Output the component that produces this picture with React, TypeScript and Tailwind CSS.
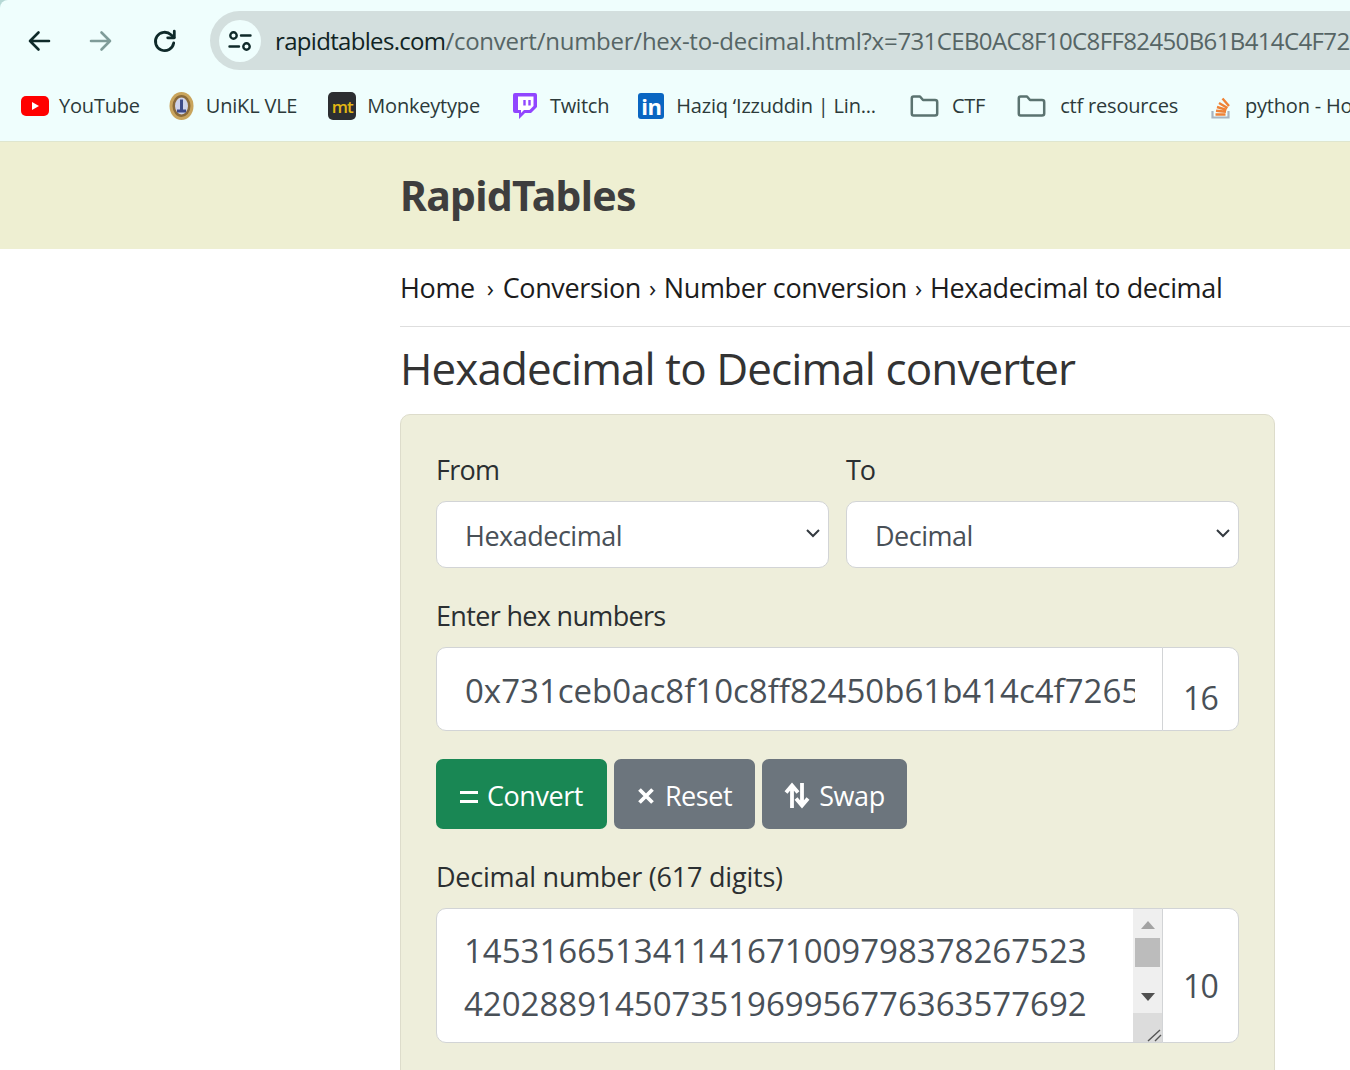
import React from "react";

const F = { fontFamily: '"Open Sans", "Noto Sans", sans-serif' };

function Bookmark({ icon, label, gap = "gap-[10px]", className = "" }: { icon: React.ReactNode; label: string; gap?: string; className?: string }) {
  return (
    <div className={`flex items-center shrink-0 ${gap} ${className}`}>
      <span className="w-[30px] h-[30px] flex items-center justify-center shrink-0">{icon}</span>
      <span className="text-[20px] leading-[28px] text-[#2c3a3a] whitespace-nowrap tracking-[-0.2px]">{label}</span>
    </div>
  );
}

const Folder = () => (
  <svg width="29" height="22" viewBox="0 0 29 22" fill="none" stroke="#5b7370" strokeWidth="2.5" strokeLinejoin="round">
    <path d="M1.8 3.2 Q1.8 1.5 3.5 1.5 H10 L13 5 H25 Q27.2 5 27.2 7 V18.5 Q27.2 20.5 25 20.5 H3.5 Q1.8 20.5 1.8 18.5 Z" />
  </svg>
);

const Chevron = () => (
  <svg width="16" height="10" viewBox="0 0 16 10" fill="none" stroke="#343a40" strokeWidth="2" className="mb-[4px]">
    <path d="M2 2l6 6 6-6" />
  </svg>
);

export default function App() {
  return (
    <div className="w-[1350px] h-[1070px] overflow-hidden bg-[#b5d8d5] text-[#212529]" style={F}>
      {/* browser chrome */}
      <div className="h-[142px] bg-[#effefd] rounded-tl-[8px] border-b border-[#dfe6cf] flex flex-col overflow-hidden">
        <div className="h-[82px] pt-[11px] flex items-start shrink-0">
          <div className="flex items-center h-[59px] pl-[25px] shrink-0">
            <svg width="28" height="28" viewBox="0 0 28 28" fill="none" stroke="#0f2a2a" strokeWidth="2.6" strokeLinecap="round" strokeLinejoin="round">
              <path d="M24 14H5M13.5 5.5 5 14l8.5 8.5" />
            </svg>
            <svg width="28" height="28" viewBox="0 0 28 28" fill="none" stroke="#7f9c99" strokeWidth="2.6" strokeLinecap="round" strokeLinejoin="round" className="ml-[34px]">
              <path d="M4 14h19M14.5 5.5 23 14l-8.5 8.5" />
            </svg>
            <svg width="26" height="26" viewBox="0 0 26 26" fill="none" stroke="#0f2a2a" strokeWidth="2.8" strokeLinecap="round" strokeLinejoin="round" className="ml-[37px]">
              <path d="M21.7 15A9.2 9.2 0 1 1 19 6.8L22 9.5" />
              <path d="M22.3 3.2v6.6h-6.6" />
            </svg>
          </div>
          <div className="ml-[32px] flex-1 h-[59px] rounded-l-full bg-[#d3dfde] flex items-center pl-[9px] min-w-0">
            <div className="w-[42px] h-[42px] rounded-full bg-[#effefd] flex items-center justify-center shrink-0">
              <svg width="24" height="22" viewBox="0 0 24 22" fill="none" stroke="#0f2a2a" strokeWidth="2.4" strokeLinecap="round">
                <circle cx="5.5" cy="5.5" r="3.2" />
                <path d="M13 5.5h9.5M1.5 16.5h9.5" />
                <circle cx="18.5" cy="16.5" r="3.2" />
              </svg>
            </div>
            <div className="ml-[14px] text-[24px] leading-[32px] whitespace-nowrap text-[#566565]">
              <span className="text-[#102424] tracking-[-0.68px]">rapidtables.com</span>
              <span className="tracking-[-0.25px]">/convert/number/hex-to-decimal.html?x=</span>
              <span className="tracking-[-0.62px]">731CEB0AC8F10C8FF82450B61B414C4F7265</span>
            </div>
          </div>
        </div>
        <div className="flex items-center h-[48px] pl-[20px] gap-[28px] whitespace-nowrap">
          <Bookmark
            gap="gap-[9px]"
            icon={
              <svg width="30" height="22" viewBox="0 0 30 22">
                <rect x="1" y="1" width="28" height="20" rx="5" fill="#f00" />
                <path d="M12 7l7 4-7 4z" fill="#fff" />
              </svg>
            }
            label="YouTube"
          />
          <Bookmark
            gap="gap-[9px]"
            className="-ml-[1px]"
            icon={
              <svg width="25" height="30" viewBox="0 0 25 30">
                <ellipse cx="12.5" cy="15" rx="12" ry="14" fill="#c9a45c" />
                <ellipse cx="12.5" cy="15" rx="9" ry="11" fill="#8a6a3a" />
                <ellipse cx="12.5" cy="15" rx="6.5" ry="8.5" fill="#cfd3ea" />
                <path d="M12.5 8.5v10M8 20h9" stroke="#3d4a88" strokeWidth="3" />
              </svg>
            }
            label="UniKL VLE"
          />
          <Bookmark
            gap="gap-[10px]"
            className="ml-[2px]"
            icon={
              <span className="w-[28px] h-[28px] rounded-[5px] bg-[#2c2e31] flex items-center justify-center text-[#e2b714] text-[17px] font-semibold leading-none tracking-[-1px]">mt</span>
            }
            label="Monkeytype"
          />
          <Bookmark
            gap="gap-[10px]"
            className="ml-[2px]"
            icon={
              <svg width="26" height="28" viewBox="0 0 26 28">
                <path d="M3 1h20q2 0 2 2v12l-6 6h-6l-6 6v-6H3q-2 0-2-2V3q0-2 2-2z" fill="#9146ff" />
                <path d="M6 4.5h15.5v9.5l-4 4H12l-3 3v-3H6z" fill="#fff" />
                <path d="M12.5 8v5.5M17.5 8v5.5" stroke="#9146ff" strokeWidth="2.4" />
              </svg>
            }
            label="Twitch"
          />
          <Bookmark
            gap="gap-[10px]"
            className="-ml-[1px]"
            icon={
              <span className="w-[26px] h-[26px] rounded-[3px] bg-[#0a66c2] flex items-center justify-center text-white text-[22px] font-bold leading-none tracking-[-0.5px]">in</span>
            }
            label="Haziq ‘Izzuddin | Lin..."
          />
          <Bookmark gap="gap-[12px]" className="ml-[6px]" icon={<Folder />} label="CTF" />
          <Bookmark gap="gap-[14px]" className="ml-[3px]" icon={<Folder />} label="ctf resources" />
          <Bookmark
            gap="gap-[9px]"
            icon={
              <svg width="22" height="28" viewBox="0 0 22 28" fill="none">
                <path d="M2.5 19v6.5h16V19" stroke="#a8b4c0" strokeWidth="2.2" />
                <path d="M5.5 22.5h10M6 18.7l10 1M7 15l9.5 2.8M9 11l8.5 5M12.5 6.5l6.5 7.5" stroke="#ef8236" strokeWidth="2.4" />
              </svg>
            }
            label="python - How to convert"
          />
        </div>
      </div>

      {/* site header */}
      <div className="h-[107px] bg-[#eeefd2] pl-[400px] pb-[2px] flex items-center">
        <span className="text-[41px] leading-[48px] font-bold text-[#3e3e3e] tracking-[-0.7px]" style={{ fontFamily: '"Noto Sans", sans-serif' }}>RapidTables</span>
      </div>

      {/* content */}
      <div className="bg-white pl-[400px] h-[821px]">
        <div className="h-[78px] border-b border-[#dedede] flex items-center text-[27px] leading-[36px] text-[#1c1c1c] whitespace-nowrap tracking-[-0.37px]">
          <span>Home</span>
          <span className="ml-[12px] mr-[9px] text-[24px]">›</span>
          <span>Conversion</span>
          <span className="mx-[8px] text-[24px]">›</span>
          <span>Number conversion</span>
          <span className="mx-[8px] text-[24px]">›</span>
          <span>Hexadecimal to decimal</span>
        </div>
        <h1 className="mt-[15px] text-[44px] leading-[52px] text-[#333] whitespace-nowrap tracking-[-0.9px]">Hexadecimal to Decimal converter</h1>

        <div className="mt-[20px] w-[875px] h-[700px] rounded-t-[10px] border border-[#dddccb] bg-[#eeeedb] px-[35px] pt-[36px]">
          <div className="flex gap-[17px]">
            <div className="w-[393px]">
              <div className="text-[27px] leading-[38px] text-[#2b2f31] tracking-[-0.7px]">From</div>
              <div className="mt-[12px] h-[67px] rounded-[10px] bg-white border border-[#d2d4d6] pl-[28px] pr-[7px] flex items-center justify-between text-[27px] text-[#495057] tracking-[-0.5px]">
                <span className="pt-[4px]">Hexadecimal</span>
                <Chevron />
              </div>
            </div>
            <div className="w-[393px]">
              <div className="text-[27px] leading-[38px] text-[#2b2f31] tracking-[-1px]">To</div>
              <div className="mt-[12px] h-[67px] rounded-[10px] bg-white border border-[#d2d4d6] pl-[28px] pr-[7px] flex items-center justify-between text-[27px] text-[#495057] tracking-[-0.5px]">
                <span className="pt-[4px]">Decimal</span>
                <Chevron />
              </div>
            </div>
          </div>

          <div className="mt-[29px] text-[27px] leading-[38px] text-[#2b2f31] tracking-[-0.67px]">Enter hex numbers</div>
          <div className="mt-[12px] flex h-[84px] w-[803px]">
            <div className="w-[727px] rounded-l-[10px] bg-white border border-[#d2d4d6] pl-[28px] pr-[27px] flex items-center overflow-hidden">
              <div className="overflow-hidden whitespace-nowrap pt-[4px] text-[33px] leading-[44px] text-[#495057]">0x731ceb0ac8f10c8ff82450b61b414c4f7265f</div>
            </div>
            <div className="flex-1 -ml-px rounded-r-[10px] bg-white border border-[#d2d4d6] flex items-center justify-center pt-[18px] text-[32px] leading-[44px] text-[#495057] tracking-[-0.8px]">16</div>
          </div>

          <div className="mt-[28px] flex gap-[7px] text-white text-[27px] leading-[38px] tracking-[-0.45px]">
            <div className="h-[70px] w-[171px] rounded-[7px] bg-[#198754] flex items-center justify-center gap-[9px]">
              <svg width="18" height="12" viewBox="0 0 18 12" stroke="#fff" strokeWidth="3" className="mt-[6px]"><path d="M0 1.5h18M0 10.5h18" /></svg>
              <span className="pt-[4px]">Convert</span>
            </div>
            <div className="h-[70px] w-[141px] rounded-[7px] bg-[#6c757d] flex items-center justify-center gap-[10px]">
              <svg width="18" height="18" viewBox="0 0 18 18" stroke="#fff" strokeWidth="3.8" className="mt-[3px]"><path d="M2.5 2.5l13 13M15.5 2.5l-13 13" /></svg>
              <span className="pt-[4px]">Reset</span>
            </div>
            <div className="h-[70px] w-[145px] rounded-[7px] bg-[#6c757d] flex items-center justify-center gap-[9px]">
              <svg width="26" height="27" viewBox="0 0 26 27" fill="none" stroke="#fff" strokeWidth="3.8" className="mt-[2px]"><path d="M8 26V4M2 10.5l6-7 6 7M18 1v22M12 16.5l6 7 6-7" /></svg>
              <span className="pt-[4px]">Swap</span>
            </div>
          </div>

          <div className="mt-[29px] text-[27px] leading-[38px] text-[#2b2f31] tracking-[-0.22px]">Decimal number (617 digits)</div>
          <div className="mt-[12px] flex h-[135px] w-[803px]">
            <div className="w-[727px] rounded-l-[10px] bg-white border border-[#d2d4d6] flex overflow-hidden">
              <div className="flex-1 pl-[27px] pt-[15px] text-[33px] leading-[53px] text-[#495057] whitespace-nowrap overflow-hidden">
                <div>145316651341141671009798378267523</div>
                <div>420288914507351969956776363577692</div>
              </div>
              <div className="w-[29px] bg-[#efefef] flex flex-col items-center shrink-0">
                <svg width="16" height="10" viewBox="0 0 16 10" className="mt-[11px]"><path d="M8 1l7 8H1z" fill="#a3a3a3" /></svg>
                <div className="mt-[8px] w-[25px] h-[29px] bg-[#bcbcbc]" />
                <svg width="16" height="10" viewBox="0 0 16 10" className="mt-[25px]"><path d="M8 9l7-8H1z" fill="#505050" /></svg>
                <div className="mt-[11px] w-full flex-1 bg-[#dcdcdc] flex items-end justify-end">
                  <svg width="16" height="14" viewBox="0 0 16 14" stroke="#555" strokeWidth="1.4"><path d="M2 13L14 2M9 13l6-6" /></svg>
                </div>
              </div>
            </div>
            <div className="flex-1 -ml-px rounded-r-[10px] bg-white border border-[#d2d4d6] flex items-center justify-center pt-[21px] text-[32px] leading-[44px] text-[#495057] tracking-[-0.8px]">10</div>
          </div>
        </div>
      </div>
    </div>
  );
}
